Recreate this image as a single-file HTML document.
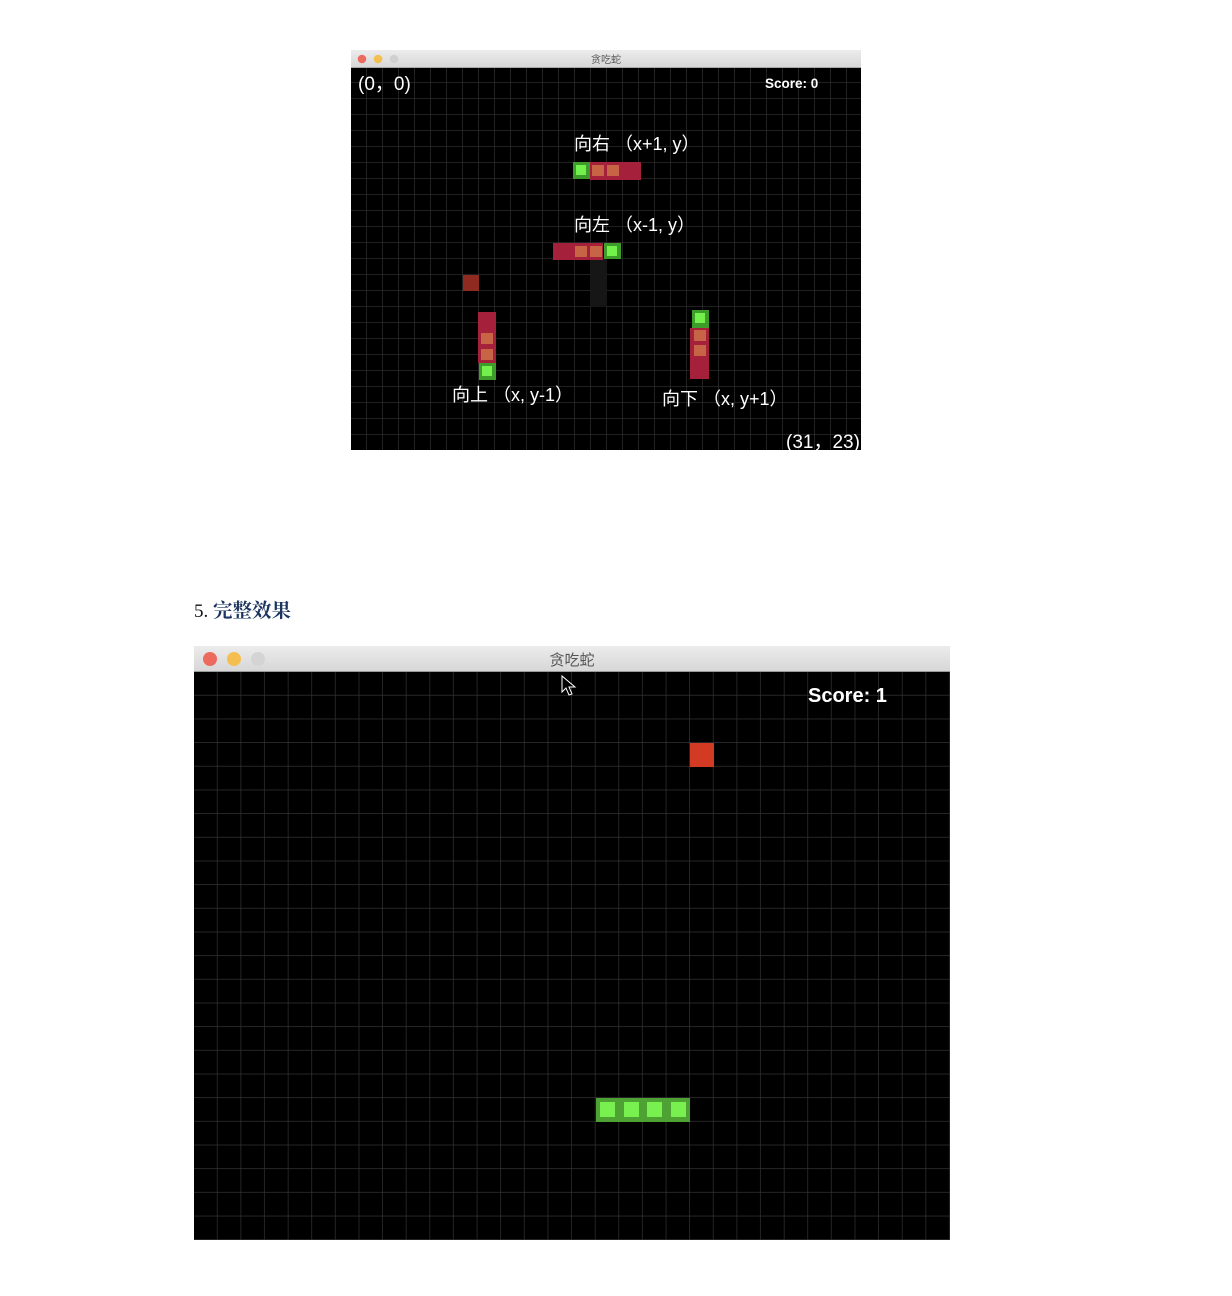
<!DOCTYPE html>
<html><head><meta charset="utf-8"><style>
html,body{margin:0;padding:0;background:#fff;width:1232px;height:1296px;overflow:hidden}
svg{position:absolute;left:0;top:0}
text{font-family:"Liberation Sans","Noto Sans CJK SC",sans-serif}
</style></head><body>
<svg width="1232" height="1296" viewBox="0 0 1232 1296">
<defs>
<pattern id="g1" x="351" y="67" width="16" height="16" patternUnits="userSpaceOnUse">
<rect width="16" height="16" fill="#000"/><path d="M16 0V16M0 16H16" stroke="#333" stroke-width="1.3"/>
</pattern>
<pattern id="g2" x="194" y="672" width="23.62" height="23.67" patternUnits="userSpaceOnUse">
<rect width="23.62" height="23.67" fill="#000"/><path d="M23.62 0V23.67M0 23.67H23.62" stroke="#333" stroke-width="1.4"/>
</pattern>
<linearGradient id="tb" x1="0" y1="0" x2="0" y2="1"><stop offset="0" stop-color="#ececec"/><stop offset="1" stop-color="#d6d6d6"/></linearGradient>
</defs>

<rect x="351" y="50" width="510" height="18" fill="url(#tb)"/>
<line x1="351" y1="67.5" x2="861" y2="67.5" stroke="#aaa"/>
<circle cx="362" cy="59" r="4.3" fill="#ed6a5e"/>
<circle cx="378" cy="59" r="4.3" fill="#f5bf4f"/>
<circle cx="394" cy="59" r="4.3" fill="#d0d0d0"/>
<text x="606" y="63" font-size="10" fill="#555" text-anchor="middle">贪吃蛇</text>
<rect x="351" y="68" width="510" height="382" fill="url(#g1)"/>
<text x="358" y="90" font-size="19" fill="#fff">(0，0)</text>
<text x="765" y="88" font-size="13.5" font-weight="bold" fill="#fff">Score: 0</text>
<text x="574" y="150" font-size="18" fill="#fff">向右 （x+1, y）</text>
<rect x="590" y="162" width="51" height="18" fill="#a5203a"/>
<rect x="592" y="165" width="12" height="11" fill="#c86446"/><rect x="607" y="165" width="12" height="11" fill="#c86446"/>
<rect x="573" y="162" width="17" height="17" fill="#3e9c2a"/><rect x="576" y="165" width="10" height="10" fill="#74f04c"/>
<text x="574" y="231" font-size="18" fill="#fff">向左 （x-1, y）</text>
<rect x="590" y="259" width="17" height="48" fill="#161616"/>
<rect x="553" y="243" width="50" height="17" fill="#a5203a"/>
<rect x="575" y="246" width="12" height="11" fill="#c86446"/><rect x="590" y="246" width="12" height="11" fill="#c86446"/>
<rect x="604" y="243" width="17" height="16" fill="#3e9c2a"/><rect x="607" y="246" width="10" height="10" fill="#74f04c"/>
<rect x="463" y="275" width="16" height="16" fill="#8e2a20"/>
<rect x="478" y="312" width="18" height="51" fill="#a5203a"/>
<rect x="481" y="333" width="12" height="11" fill="#c86446"/><rect x="481" y="349" width="12" height="11" fill="#c86446"/>
<rect x="479" y="363" width="17" height="17" fill="#3e9c2a"/><rect x="482" y="366" width="10" height="10" fill="#74f04c"/>
<text x="452" y="401" font-size="18" fill="#fff">向上 （x, y-1）</text>
<rect x="690" y="328" width="19" height="51" fill="#a5203a"/>
<rect x="694" y="330" width="12" height="11" fill="#c86446"/><rect x="694" y="345" width="12" height="11" fill="#c86446"/>
<rect x="692" y="310" width="17" height="18" fill="#3e9c2a"/><rect x="695" y="313" width="10" height="10" fill="#74f04c"/>
<text x="662" y="405" font-size="18" fill="#fff">向下 （x, y+1）</text>
<text x="786" y="448" font-size="19" fill="#fff">(31，23)</text>

<text x="194" y="617" font-size="19" fill="#111" style="font-family:'Liberation Serif','Noto Serif CJK SC',serif">5. <tspan fill="#1c3560" font-weight="bold" font-size="19.5">完整效果</tspan></text>

<rect x="194" y="646" width="756" height="26" fill="url(#tb)"/>
<line x1="194" y1="671.5" x2="950" y2="671.5" stroke="#999"/>
<circle cx="210" cy="659" r="7" fill="#ed6a5e"/>
<circle cx="234" cy="659" r="7" fill="#f5bf4f"/>
<circle cx="258" cy="659" r="7" fill="#d4d4d4"/>
<text x="572" y="665" font-size="15" fill="#555" text-anchor="middle">贪吃蛇</text>
<rect x="194" y="672" width="756" height="568" fill="url(#g2)"/>
<text x="808" y="702" font-size="20" font-weight="bold" fill="#fff">Score: 1</text>
<path d="M562 676 L562 692 L566 688 L569 695 L572 694 L569 687 L575 687 Z" fill="#000" stroke="#fff" stroke-width="1"/>
<rect x="690" y="743" width="24" height="24" fill="#d23a24"/>
<rect x="596" y="1098" width="94" height="24" fill="#4ea234"/>
<rect x="600" y="1102" width="15" height="15" fill="#78f050"/>
<rect x="624" y="1102" width="15" height="15" fill="#78f050"/>
<rect x="647" y="1102" width="15" height="15" fill="#78f050"/>
<rect x="671" y="1102" width="15" height="15" fill="#78f050"/>
</svg>
</body></html>
